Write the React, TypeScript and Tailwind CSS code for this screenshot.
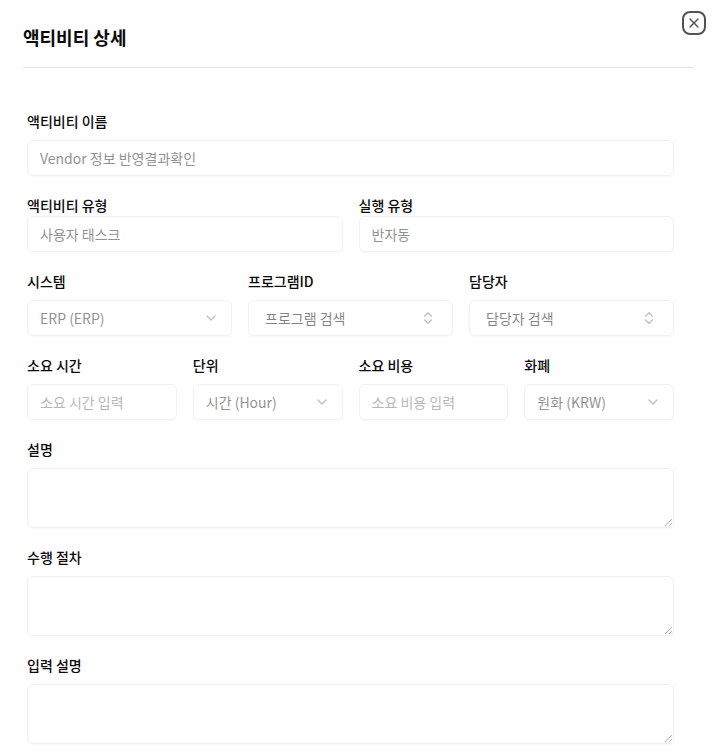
import { ChevronDown, ChevronsUpDown, X } from 'lucide-react';
import type { ReactNode } from 'react';

const control = 'h-9 w-full rounded-md border border-neutral-200 bg-transparent text-sm shadow-xs disabled:cursor-not-allowed disabled:opacity-50';

type FieldProps = {
  id: string;
  label: string;
  tight?: boolean;
  children: ReactNode;
}

function Field({ id, label, tight = false, children }: FieldProps) {
  return (
    <div className={`flex min-w-0 flex-col ${tight ? 'gap-0.5' : 'gap-2.5'}`}>
      <label htmlFor={id} className="text-sm font-medium leading-[18px]">{label}</label>
      {children}
    </div>
  );
}

type TextFieldProps = {
  id: string;
  label: string;
  value?: string;
  placeholder?: string;
  tight?: boolean;
}

function TextField({ id, label, value, placeholder, tight }: TextFieldProps) {
  return (
    <Field id={id} label={label} tight={tight}>
      <input
        id={id}
        type="text"
        disabled
        defaultValue={value}
        placeholder={placeholder}
        className={`${control} px-3 text-neutral-800 placeholder:text-neutral-500`}
      />
    </Field>
  );
}

function SelectField({ id, label, option }: { id: string; label: string; option: string }) {
  return (
    <Field id={id} label={label}>
      <div className="relative">
        <select id={id} disabled className={`${control} appearance-none pl-3 pr-8 text-neutral-800`}>
          <option>{option}</option>
        </select>
        <ChevronDown className="pointer-events-none absolute right-3 top-1/2 mr-px h-4 w-4 -translate-y-1/2 opacity-25" />
      </div>
    </Field>
  );
}

function SearchField({ id, label, text }: { id: string; label: string; text: string }) {
  return (
    <Field id={id} label={label}>
      <button
        id={id}
        type="button"
        role="combobox"
        aria-expanded={false}
        disabled
        className={`${control} flex items-center justify-between px-4`}
      >
        <span className="truncate">{text}</span>
        <ChevronsUpDown className="h-4 w-4 shrink-0 opacity-50" />
      </button>
    </Field>
  );
}

function TextAreaField({ id, label }: { id: string; label: string }) {
  return (
    <Field id={id} label={label}>
      <textarea
        id={id}
        disabled
        className="block h-15 w-full resize-y rounded-md border border-neutral-200 bg-transparent px-3 py-2 text-sm shadow-xs disabled:cursor-not-allowed disabled:opacity-50"
      />
    </Field>
  );
}

export default function App() {
  return (
    <main className="relative bg-white pb-3 pl-[23px] pr-5 font-['Noto_Sans_CJK_KR',sans-serif] text-neutral-950">
      {/* Header */}
      <header className="border-b border-neutral-200 pb-4 pt-[23px]">
        <h1 className="text-lg font-semibold leading-7">액티비티 상세</h1>
      </header>
      <button
        type="button"
        aria-label="닫기"
        className="absolute right-2 top-[11px] flex h-6 w-6 items-center justify-center rounded-lg border-2 border-neutral-600 text-neutral-600"
      >
        <X className="h-4 w-4 shrink-0" />
      </button>

      {/* Form */}
      <form className="space-y-5 pl-1 pr-5 pt-11">
        <TextField id="name" label="액티비티 이름" value="Vendor 정보 반영결과확인" />

        <div className="grid grid-cols-2 gap-4">
          <TextField id="type" label="액티비티 유형" value="사용자 태스크" tight />
          <TextField id="execution" label="실행 유형" value="반자동" tight />
        </div>

        <div className="grid grid-cols-3 gap-4">
          <SelectField id="system" label="시스템" option="ERP (ERP)" />
          <SearchField id="program" label="프로그램ID" text="프로그램 검색" />
          <SearchField id="owner" label="담당자" text="담당자 검색" />
        </div>

        <div className="grid grid-cols-4 gap-4">
          <TextField id="duration" label="소요 시간" placeholder="소요 시간 입력" />
          <SelectField id="unit" label="단위" option="시간 (Hour)" />
          <TextField id="cost" label="소요 비용" placeholder="소요 비용 입력" />
          <SelectField id="currency" label="화폐" option="원화 (KRW)" />
        </div>

        <TextAreaField id="description" label="설명" />
        <TextAreaField id="procedure" label="수행 절차" />
        <TextAreaField id="input-description" label="입력 설명" />
      </form>
    </main>
  );
}
